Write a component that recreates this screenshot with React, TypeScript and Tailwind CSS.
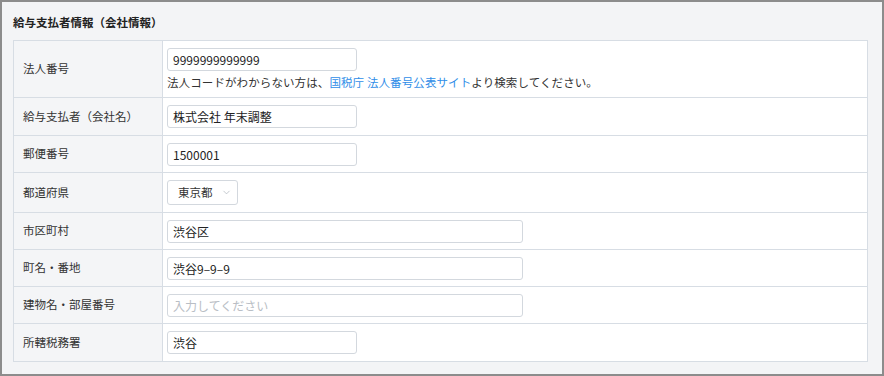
import { ChevronDown } from 'lucide-react';

const font = { fontFamily: '"Noto Sans CJK JP", "Noto Sans", sans-serif' };

type Row = {
  label: string;
  h: string;
  kind: 'short' | 'wide' | 'select';
  value?: string;
  placeholder?: string;
  note?: boolean;
};

const rows: Row[] = [
  { label: '法人番号', h: 'h-[57px]', kind: 'short', value: '9999999999999', note: true },
  { label: '給与支払者（会社名）', h: 'h-[38px]', kind: 'short', value: '株式会社 年末調整' },
  { label: '郵便番号', h: 'h-[37px]', kind: 'short', value: '1500001' },
  { label: '都道府県', h: 'h-[40px]', kind: 'select', value: '東京都' },
  { label: '市区町村', h: 'h-[37px]', kind: 'wide', value: '渋谷区' },
  { label: '町名・番地', h: 'h-[37px]', kind: 'wide', value: '渋谷9–9–9' },
  { label: '建物名・部屋番号', h: 'h-[37px]', kind: 'wide', placeholder: '入力してください' },
  { label: '所轄税務署', h: 'h-[38px]', kind: 'short', value: '渋谷' },
];

function Field({ row }: { row: Row }) {
  if (row.kind === 'select') {
    return (
      <div className="flex items-center justify-between w-[71px] h-[25px] rounded-[3px] border border-[#d3d8de] bg-white pl-[10px] pr-[5px] text-[11.5px] text-[#333]">
        <span>{row.value}</span>
        <ChevronDown size={11} strokeWidth={1.5} className="text-[#aab2bb]" />
      </div>
    );
  }
  return (
    <input
      readOnly
      value={row.value ?? ''}
      placeholder={row.placeholder}
      className={`${row.kind === 'wide' ? 'w-[356px]' : 'w-[190px]'} block h-[23px] rounded-[3px] border border-[#d3d8de] bg-white px-[5px] text-[12px] text-[#222] placeholder:text-[#b9bec5] outline-none`}
      style={font}
    />
  );
}

export default function App() {
  return (
    <div
      className="w-[884px] h-[376px] border-2 border-[#8c8c8c] bg-[#f3f4f6] pl-[11px] pr-[14px] pt-[11px] pb-[13px]"
      style={font}
    >
      <h2 className="text-[11.5px] font-bold text-[#222] leading-[18px] mb-[9px]">
        給与支払者情報（会社情報）
      </h2>
      <table className="w-full border-collapse bg-white">
        <tbody>
          {rows.map((row) => (
            <tr key={row.label} className={row.h}>
              <td className="w-[149px] border border-[#d7dde4] bg-[#f4f5f7] pl-[9px] text-[11.5px] text-[#333]">
                {row.label}
              </td>
              <td className="border border-[#d7dde4] pl-[4px] align-middle">
                <Field row={row} />
                {row.note && (
                  <p className="mt-[3px] text-[11.5px] text-[#333] leading-[16px] tracking-[0.1px]">
                    法人コードがわからない方は、
                    <span className="text-[#2f8ee8]">国税庁 法人番号公表サイト</span>
                    より検索してください。
                  </p>
                )}
              </td>
            </tr>
          ))}
        </tbody>
      </table>
    </div>
  );
}
